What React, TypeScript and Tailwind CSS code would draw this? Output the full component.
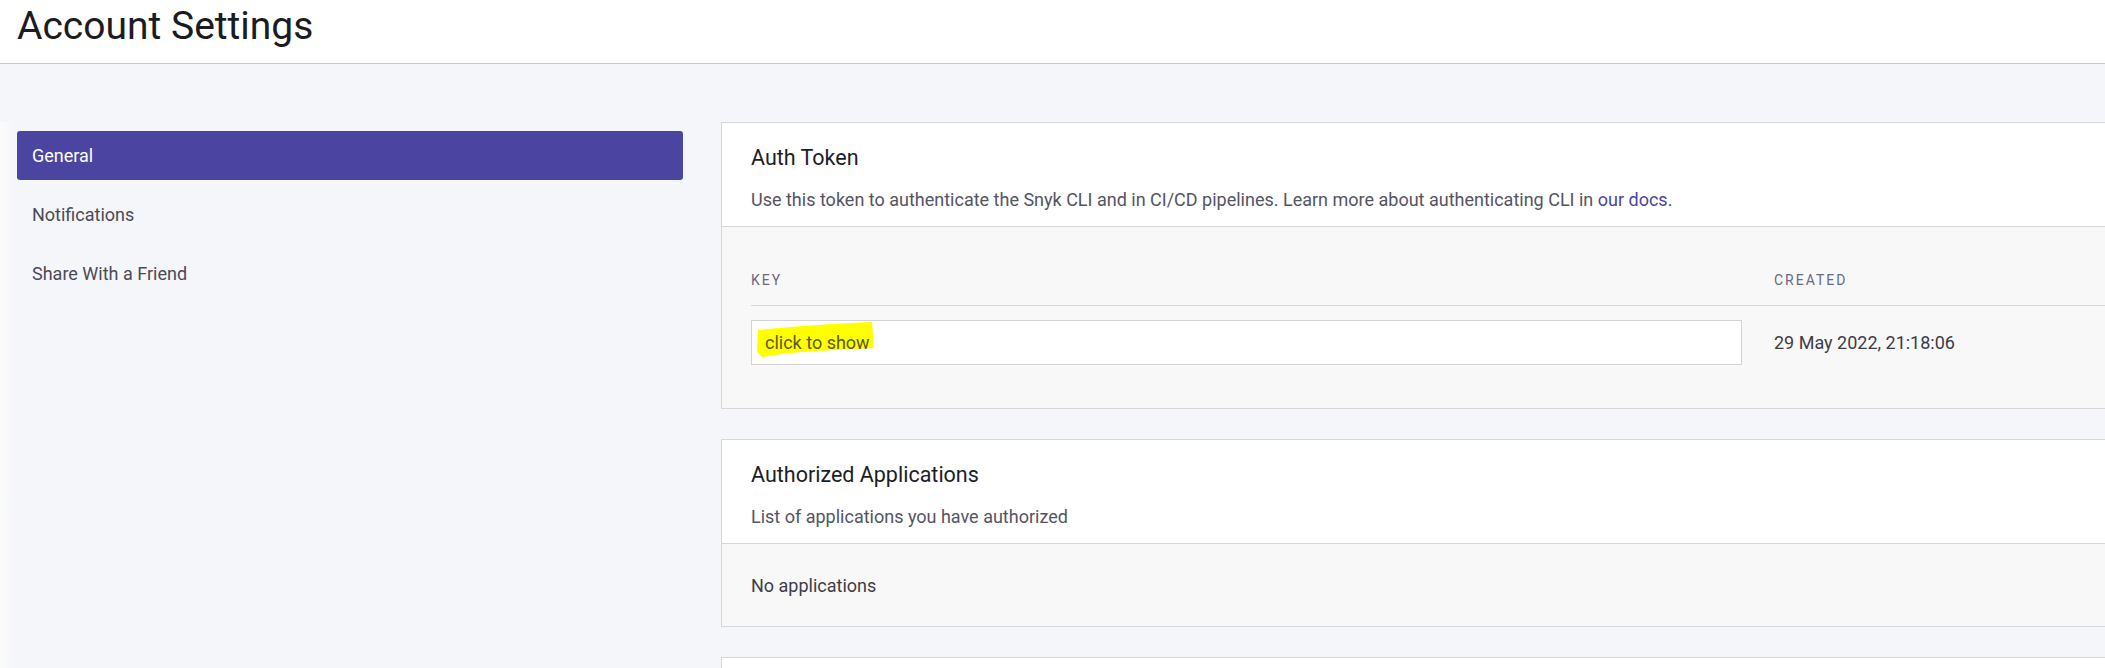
import { useState } from "react"

const navItems = ["General", "Notifications", "Share With a Friend"]

function Panel({ title, description, children }: { title: string; description: React.ReactNode; children: React.ReactNode }) {
  return (
    <section className="bg-white border border-r-0 border-[#d6d6db]">
      <div className="pt-[21px] pb-[14px] px-[29px]">
        <h2 className="text-[21.5px] leading-[28px] text-[#1d1d26]">{title}</h2>
        <p className="mt-[16px] text-[18px] leading-[24px] text-[#555463]">{description}</p>
      </div>
      <div className="bg-[#f8f8f9] border-t border-[#d6d6db]">{children}</div>
    </section>
  )
}

export default function App() {
  const [active, setActive] = useState("General")
  return (
    <div className="min-h-screen bg-[#f5f6fa] font-['Roboto',sans-serif]">
      <header className="h-[64px] bg-white border-b border-[#c6c6cc] pl-[17px] pt-[4px]">
        <h1 className="text-[39px] leading-[44px] text-[#1b1b22]">Account Settings</h1>
      </header>

      <div className="flex pt-[58px]">
        <div className="w-[14px] shrink-0 self-stretch bg-gradient-to-r from-[#fbfbfc] to-[#f5f6fa]" />

        <nav className="w-[666px] shrink-0 ml-[3px] mt-[9px] flex flex-col gap-[10px]">
          {navItems.map(item => (
            <button
              key={item}
              onClick={() => setActive(item)}
              className={`h-[49px] px-[15px] flex items-center text-left text-[18px] rounded-[3px] ${active === item ? "bg-[#4b45a1] text-white" : "text-[#4b4a57]"}`}
            >
              {item}
            </button>
          ))}
        </nav>

        <main className="ml-[38px] flex-1 flex flex-col gap-[30px]">
          <Panel
            title="Auth Token"
            description={
              <>
                Use this token to authenticate the Snyk CLI and in CI/CD pipelines. Learn more about authenticating CLI in{" "}
                <a className="text-[#4b45a1]">our docs.</a>
              </>
            }
          >
            <div className="pl-[29px] pt-[43px] pb-[43px]">
              <div className="grid grid-cols-[991px_1fr] gap-x-[32px] border-b border-[#d6d6db] pb-[15px]">
                <span className="text-[14px] leading-[20px] tracking-[2px] text-[#6b6882]">KEY</span>
                <span className="text-[14px] leading-[20px] tracking-[2px] text-[#6b6882]">CREATED</span>
              </div>
              <div className="grid grid-cols-[991px_1fr] gap-x-[32px] items-center pt-[14px]">
                <div className="h-[45px] bg-white border border-[#d2d2d7] flex items-center pl-[13px]">
                  <span className="relative text-[18px] text-[#5b5a2a]">
                    {/* yellow marker from the screenshot annotation */}
                    <svg className="absolute -left-[9px] -top-[7px] w-[120px] h-[36px]" viewBox="0 0 120 36" preserveAspectRatio="none">
                      <path d="M2 8 C 30 5, 70 2, 116 0 L 118 26 C 80 28, 40 29, 6 35 L 1 30 Z" fill="#ffff00" />
                    </svg>
                    <span className="relative">click to show</span>
                  </span>
                </div>
                <span className="text-[18px] leading-[24px] text-[#3d3c47]">29 May 2022, 21:18:06</span>
              </div>
            </div>
          </Panel>

          <Panel title="Authorized Applications" description="List of applications you have authorized">
            <div className="px-[29px] pt-[30px] pb-[28px] text-[18px] leading-[24px] text-[#3d3c47]">No applications</div>
          </Panel>

          <section className="bg-white border border-r-0 border-[#d6d6db] h-[120px]" />
        </main>
      </div>
    </div>
  )
}
